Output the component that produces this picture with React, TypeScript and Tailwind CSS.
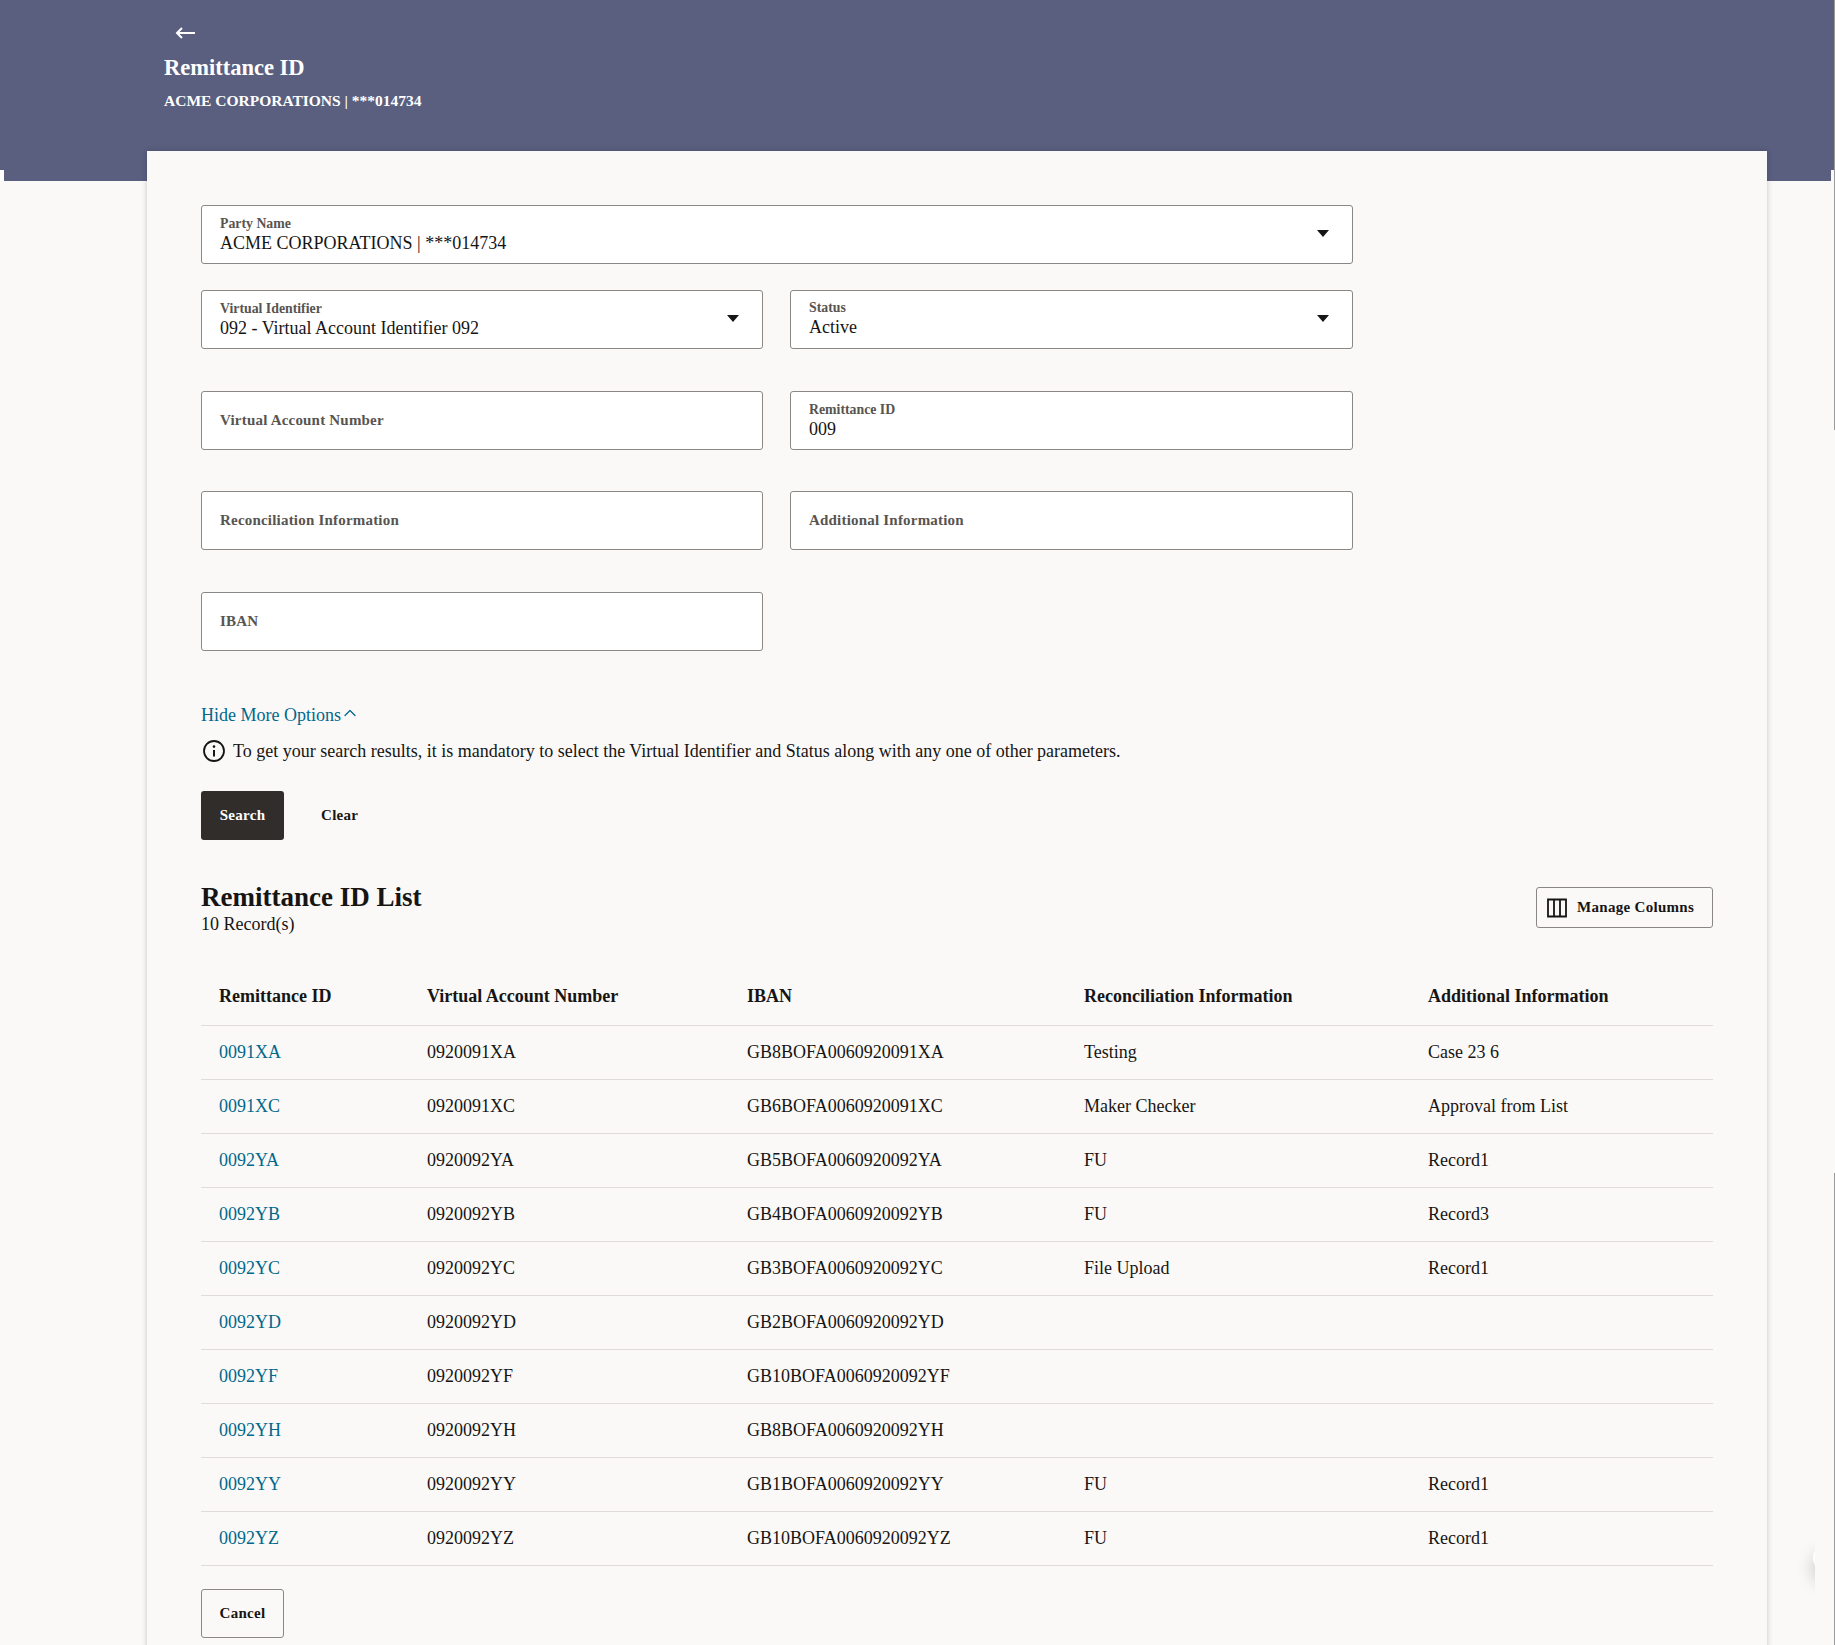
import { ChevronUp } from 'lucide-react';

const rows = [
  ['0091XA', '0920091XA', 'GB8BOFA0060920091XA', 'Testing', 'Case 23 6'],
  ['0091XC', '0920091XC', 'GB6BOFA0060920091XC', 'Maker Checker', 'Approval from List'],
  ['0092YA', '0920092YA', 'GB5BOFA0060920092YA', 'FU', 'Record1'],
  ['0092YB', '0920092YB', 'GB4BOFA0060920092YB', 'FU', 'Record3'],
  ['0092YC', '0920092YC', 'GB3BOFA0060920092YC', 'File Upload', 'Record1'],
  ['0092YD', '0920092YD', 'GB2BOFA0060920092YD', '', ''],
  ['0092YF', '0920092YF', 'GB10BOFA0060920092YF', '', ''],
  ['0092YH', '0920092YH', 'GB8BOFA0060920092YH', '', ''],
  ['0092YY', '0920092YY', 'GB1BOFA0060920092YY', 'FU', 'Record1'],
  ['0092YZ', '0920092YZ', 'GB10BOFA0060920092YZ', 'FU', 'Record1'],
];

const headers = [
  'Remittance ID',
  'Virtual Account Number',
  'IBAN',
  'Reconciliation Information',
  'Additional Information',
];

function Field({
  label,
  value,
  select,
  lifted,
}: {
  label: string;
  value?: string;
  select?: boolean;
  lifted?: boolean;
}) {
  return (
    <div className="h-[59px] bg-white border border-[#8a8785] rounded-[3px] pl-[18px] pr-[23px] flex items-center justify-between">
      {value ? (
        <div className={`flex flex-col ${lifted ? 'pb-[1px]' : 'pt-[2px]'}`}>
          <span className="text-[13.8px] leading-[15px] font-bold text-[#58544f]">{label}</span>
          <span className="text-[18px] leading-[24px] text-[#161513]">{value}</span>
        </div>
      ) : (
        <span className="text-[15px] font-bold tracking-[0.2px] text-[#58544f]">{label}</span>
      )}
      {select && (
        <svg width="12" height="7" viewBox="0 0 12 7" className="-mt-[3px]">
          <path d="M0 0h12L6 7z" fill="#161513" />
        </svg>
      )}
    </div>
  );
}

export default function App() {
  return (
    <div className="relative h-[1645px] overflow-hidden bg-[#fbf9f8] font-['Liberation_Serif',serif] text-[#161513]">
      <div className="h-[181px] bg-[#5a5f80] pl-[164px] pt-[21px] text-white -mb-[30px]">
        <svg width="20" height="12" viewBox="0 0 20 12" fill="none" stroke="white" strokeWidth="2" className="ml-[11px] mt-[6px]">
          <path d="M20 6H2M7 1L2 6l5 5" />
        </svg>
        <div className="mt-[15px] text-[22.5px] leading-[28px] font-bold">Remittance ID</div>
        <div className="mt-[9px] text-[15.5px] leading-[20px] font-bold">
          ACME CORPORATIONS | ***014734
        </div>
      </div>

      <main className="relative ml-[147px] w-[1620px] h-[1520px] bg-[#fbf9f8] shadow-[0_0_6px_rgba(0,0,0,0.2)] px-[54px] pt-[54px]">
        <div className="w-[1152px]">
          <Field label="Party Name" value="ACME CORPORATIONS | ***014734" select />
          <div className="grid grid-cols-[562px_563px] gap-x-[27px] mt-[26px]">
            <Field label="Virtual Identifier" value="092 - Virtual Account Identifier 092" select />
            <Field label="Status" value="Active" select lifted />
          </div>
          <div className="grid grid-cols-[562px_563px] gap-x-[27px] mt-[42px]">
            <Field label="Virtual Account Number" />
            <Field label="Remittance ID" value="009" />
          </div>
          <div className="grid grid-cols-[562px_563px] gap-x-[27px] mt-[41px]">
            <Field label="Reconciliation Information" />
            <Field label="Additional Information" />
          </div>
          <div className="grid grid-cols-[562px_563px] gap-x-[27px] mt-[42px]">
            <Field label="IBAN" />
          </div>
        </div>

        <div className="mt-[53px] flex items-center text-[18px] leading-[22px] text-[#00688c]">
          Hide More Options
          <ChevronUp className="w-[20px] h-[20px] -mt-[5px] -ml-[1px]" strokeWidth={1.5} />
        </div>
        <div className="mt-[13px] flex items-center text-[18px] leading-[22px]">
          <svg width="24" height="24" viewBox="0 0 24 24" fill="none" className="ml-[1px] mr-[7px]">
            <circle cx="12" cy="12" r="10" stroke="#161513" strokeWidth="1.8" />
            <circle cx="12" cy="7.6" r="1.3" fill="#161513" />
            <path d="M12 11v6.5" stroke="#161513" strokeWidth="2" />
          </svg>
          To get your search results, it is mandatory to select the Virtual Identifier and Status along with any one of other parameters.
        </div>
        <div className="mt-[28px] flex items-center">
          <button className="w-[83px] h-[49px] rounded-[3px] bg-[#312d2a] text-white text-[15px] font-bold tracking-[0.3px]">
            Search
          </button>
          <button className="ml-[37px] text-[15px] font-bold tracking-[0.3px]">Clear</button>
        </div>

        <div className="mt-[41px] flex items-start justify-between">
          <div>
            <h2 className="text-[27px] leading-[32px] font-bold">Remittance ID List</h2>
            <div className="text-[18px] leading-[23px]">10 Record(s)</div>
          </div>
          <button className="mt-[6px] w-[177px] h-[41px] border border-[#8a8785] rounded-[3px] flex items-center pl-[10px] text-[15px] font-bold tracking-[0.3px]">
            <svg width="20" height="20" viewBox="0 0 20 20" fill="none" stroke="#161513" strokeWidth="1.8" className="mr-[10px]">
              <path d="M1 1.5h18v17H1zM7 1.5v17M13 1.5v17" />
            </svg>
            Manage Columns
          </button>
        </div>

        <table className="mt-[33px] w-full table-fixed border-collapse">
          <colgroup>
            <col className="w-[208px]" />
            <col className="w-[320px]" />
            <col className="w-[337px]" />
            <col className="w-[344px]" />
            <col />
          </colgroup>
          <thead>
            <tr className="h-[56px] border-b border-[#dfdcd9]">
              {headers.map(h => (
                <th key={h} className="pl-[18px] text-left text-[18px] font-bold">
                  {h}
                </th>
              ))}
            </tr>
          </thead>
          <tbody>
            {rows.map(row => (
              <tr key={row[0]} className="h-[54px] border-b border-[#dfdcd9] text-[18px]">
                <td className="pl-[18px] text-[#00688c]">{row[0]}</td>
                <td className="pl-[18px]">{row[1]}</td>
                <td className="pl-[18px]">{row[2]}</td>
                <td className="pl-[18px]">{row[3]}</td>
                <td className="pl-[18px]">{row[4]}</td>
              </tr>
            ))}
          </tbody>
        </table>

        <button className="mt-[23px] block w-[83px] h-[49px] border border-[#8a8785] rounded-[3px] text-[15px] font-bold tracking-[0.3px]">
          Cancel
        </button>
      </main>

      {/* page edge artefacts of the capture */}
      <div className="absolute left-0 top-[170px] w-[4px] h-[11px] bg-white" />
      <div className="absolute right-0 top-[170px] w-[4px] h-[11px] bg-[#fbf9f8]" />
      <div className="absolute right-0 top-0 w-[1px] h-[430px] bg-[#9a9a9a]" />
      <div className="absolute right-0 top-[1173px] w-[1px] h-[472px] bg-[#9a9a9a]" />

      {/* chat launcher, mostly cut off at the window edge */}
      <div className="absolute left-[1775px] top-[1500px] w-[40px] h-[130px] overflow-hidden">
        <div className="absolute left-[38px] top-[43px] w-[30px] h-[30px] rounded-full bg-white shadow-[0_10px_18px_rgba(0,0,0,0.22)]" />
      </div>
    </div>
  );
}
